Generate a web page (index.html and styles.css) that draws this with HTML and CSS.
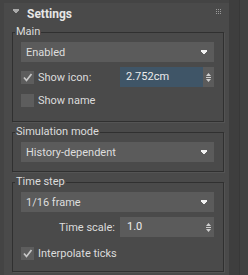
FILE: index.html
```html
<!DOCTYPE html>
<html>
<head>
<meta charset="utf-8">
<link rel="stylesheet" href="styles.css">
</head>
<body>
<div class="app">
  <div class="panel">
    <div class="header">
      <svg class="caret" width="6" height="4" viewBox="0 0 6 4"><path d="M0 0H6V2H5V3H4V4H2V3H1V2H0Z"/></svg>
      <span class="title">Settings</span>
      <svg class="grip" width="5" height="5" viewBox="0 0 5 5"><path d="M0 0h1v1H0zM2 0h1v1H2zM4 0h1v1H4zM0 2h1v1H0zM2 2h1v1H2zM4 2h1v1H4zM0 4h1v1H0zM2 4h1v1H2zM4 4h1v1H4z"/></svg>
    </div>

    <fieldset class="group g-main">
      <legend>Main</legend>
      <div class="select"><span>Enabled</span><svg class="arrow" width="6" height="4" viewBox="0 0 6 4"><path d="M0 0H6V2H5V3H4V4H2V3H1V2H0Z"/></svg></div>
      <div class="row r-icon">
        <label class="check"><span class="box"><svg width="13" height="13" viewBox="0 0 13 13"><path d="M3 6.5L5.5 9.5L10.5 3"/></svg></span>Show icon:</label>
        <div class="spin active"><span class="val">2.752cm</span><span class="btn"><svg width="5" height="9" viewBox="0 0 5 9"><path d="M2.5 0L5 3H0ZM0 4H5V5H0ZM0 6H5L2.5 9Z"/></svg></span></div>
      </div>
      <div class="row r-name">
        <label class="check"><span class="box"></span>Show name</label>
      </div>
    </fieldset>

    <fieldset class="group g-sim">
      <legend>Simulation mode</legend>
      <div class="select"><span>History-dependent</span><svg class="arrow" width="6" height="4" viewBox="0 0 6 4"><path d="M0 0H6V2H5V3H4V4H2V3H1V2H0Z"/></svg></div>
    </fieldset>

    <fieldset class="group g-time">
      <legend>Time step</legend>
      <div class="select"><span>1/16 frame</span><svg class="arrow" width="6" height="4" viewBox="0 0 6 4"><path d="M0 0H6V2H5V3H4V4H2V3H1V2H0Z"/></svg></div>
      <div class="row r-scale">
        <span class="ts-label">Time scale:</span>
        <div class="spin"><span class="val">1.0</span><span class="btn"><svg width="5" height="9" viewBox="0 0 5 9"><path d="M2.5 0L5 3H0ZM0 4H5V5H0ZM0 6H5L2.5 9Z"/></svg></span></div>
      </div>
      <div class="row r-interp">
        <label class="check"><span class="box"><svg width="13" height="13" viewBox="0 0 13 13"><path d="M3 6.5L5.5 9.5L10.5 3"/></svg></span>Interpolate ticks</label>
      </div>
    </fieldset>
  </div>
  <div class="scroll"><div class="track t1"></div><div class="track t2"></div></div>
</div>
</body>
</html>
```

FILE: styles.css
```css
html, body {
  margin: 0;
  padding: 0;
  background: #444444;
}
.app {
  display: flex;
  width: 248px;
  height: 275px;
  overflow: hidden;
  background: #444444;
  padding-left: 4px;
  box-sizing: border-box;
  font-family: Roboto, "Liberation Sans", sans-serif;
  font-size: 11px;
  color: #dcdcdc;
}
.panel {
  flex: none;
  width: 225px;
  margin-top: 3px;
  background: #4a4a4a;
  box-sizing: border-box;
}
.header {
  display: flex;
  align-items: flex-start;
  height: 22px;
  padding-left: 9px;
  padding-right: 8px;
}
.caret {
  margin-top: 6px;
  fill: #a9a9a9;
}
.title {
  margin-left: 8px;
  font-size: 12px;
  font-weight: bold;
  line-height: 22px;
  color: #e6e6e6;
}
.grip {
  margin-left: auto;
  margin-top: 6px;
  fill: #9a9a9a;
}
.group {
  margin: 0 5px 0 8px;
  padding: 3px 9px 11px 8px;
  border: 1px solid #303030;
  box-shadow: 1px 1px 0 #545454;
  min-width: 0;
}
.group legend {
  margin-left: -6px;
  padding: 0 1px;
  line-height: 14px;
  font-size: 11px;
  color: #dcdcdc;
}
.g-sim {
  margin-top: 3px;
  padding-bottom: 9px;
}
.g-time {
  margin-top: 3px;
  padding-bottom: 8px;
}
.select {
  height: 20px;
  background: #5b5b5b;
  display: flex;
  align-items: center;
  justify-content: space-between;
  padding: 0 7px 0 5px;
  color: #dedede;
}
.arrow {
  fill: #f0f0f0;
  margin-bottom: 1px;
}
.row {
  display: grid;
  grid-template-columns: 1fr 94px;
  column-gap: 5px;
  height: 20px;
  align-items: center;
}
.r-icon { margin-top: 5px; }
.r-name { margin-top: 3px; }
.r-scale { margin-top: 5px; }
.r-interp { margin-top: 6px; }
.check {
  display: flex;
  align-items: center;
  gap: 4px;
  white-space: nowrap;
}
.box {
  width: 13px;
  height: 13px;
  background: #5d5d5d;
  display: block;
}
.box svg {
  display: block;
  fill: none;
  stroke: #c8c8c8;
  stroke-width: 1.7;
}
.spin {
  height: 20px;
  display: flex;
  background: #5b5b5b;
}
.spin .val {
  flex: 1;
  padding-left: 7px;
  line-height: 20px;
  color: #ececec;
}
.spin.active .val {
  background: #3f5567;
  padding-left: 6px;
}
.spin .btn {
  width: 11px;
  display: flex;
  align-items: center;
  justify-content: center;
  fill: #cfcfcf;
}
.ts-label {
  text-align: right;
}
.scroll {
  flex: 1;
  display: flex;
}
.track.t1 {
  width: 10px;
  background: #3e3e3e;
  border-right: 1px solid #383838;
}
.track.t2 {
  flex: 1;
  background: #414141;
}
```
